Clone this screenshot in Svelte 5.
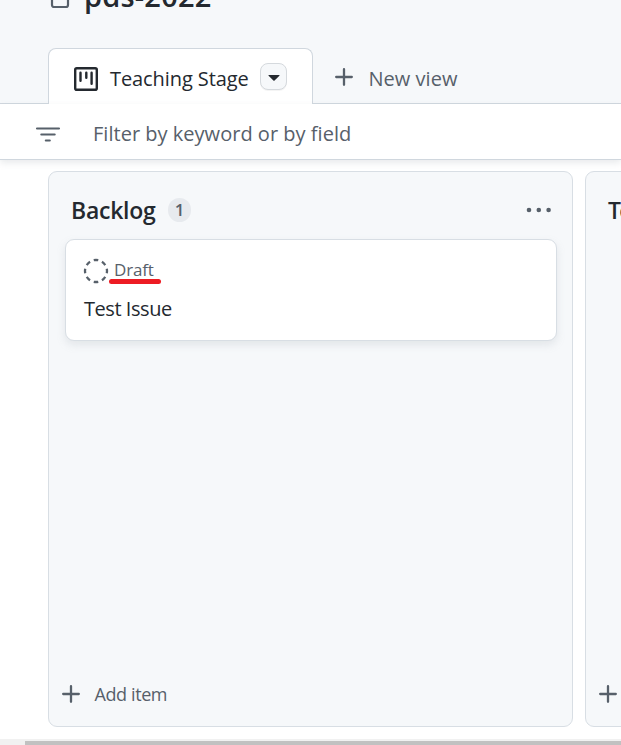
<script>
  const columns = [
    { name: 'Backlog', count: 1, items: [{ kind: 'Draft', title: 'Test Issue' }] },
    { name: 'Todo', count: 0, items: [], tight: true }
  ];
</script>

{#snippet plus()}
  <svg class="plus" width="18" height="18" viewBox="0 0 18 18"><path d="M9 1.2v15.6M1.2 9h15.6" /></svg>
{/snippet}

<div class="page">
  <header>
    <div class="project">
      <svg width="20" height="24" viewBox="0 0 20 24"><rect x="2" y="2" width="16" height="20" rx="2" /></svg>
      <h1>pds-2022</h1>
    </div>
    <nav>
      <div class="tab">
        <svg width="24" height="24" viewBox="0 0 24 24">
          <rect x="1.2" y="1.2" width="21.6" height="21.6" rx="1.6" />
          <path d="M6.5 5.7v8M12.3 5.7v5M17.6 5.7v11" />
        </svg>
        <span class="label">Teaching Stage</span>
        <button aria-label="View options">
          <svg width="12" height="6" viewBox="0 0 12 6"><path d="M0.8 0h10.4q.6.3.2.8L6.6 5.6q-.6.5-1.2 0L.6.8Q.2.3.8 0z" /></svg>
        </button>
      </div>
      <div class="new-view">{@render plus()}<span>New view</span></div>
    </nav>
  </header>

  <div class="filter">
    <svg width="26" height="18" viewBox="0 0 26 18"><path d="M2 2.5h22M6.3 8.5h13.4M10.8 14.5h4" /></svg>
    <span>Filter by keyword or by field</span>
  </div>

  <main>
    {#each columns as column}
      <section>
        <div class="head">
          <h2 class:tight={column.tight}>{column.name}</h2>
          <span class="count">{column.count}</span>
          <svg class="dots" width="26" height="6" viewBox="0 0 26 6">
            <circle cx="3" cy="3" r="2.3" /><circle cx="12.8" cy="3" r="2.3" /><circle cx="22.6" cy="3" r="2.3" />
          </svg>
        </div>
        <div class="items">
          {#each column.items as item}
            <article>
              <div class="kind">
                <svg width="26" height="26" viewBox="0 0 26 26"><circle cx="13" cy="13" r="11" pathLength="80" /></svg>
                <span>{item.kind}</span>
                <i></i>
              </div>
              <p>{item.title}</p>
            </article>
          {/each}
        </div>
        <div class="add">{@render plus()}<span>Add item</span></div>
      </section>
    {/each}
  </main>
  <div class="scroll"><div class="thumb"></div></div>
</div>

<style>
  :global(body) { margin: 0; overflow: hidden; }
  .page {
    width: 621px; height: 745px; overflow: hidden; background: #fff;
    display: flex; flex-direction: column; box-sizing: border-box;
    font-family: "Open Sans", "Noto Sans", sans-serif; color: #24292f;
  }
  .page * { box-sizing: border-box; }
  svg { display: block; flex: none; fill: none; stroke: #57606a; }
  h1, h2, p { margin: 0; }
  span, h1, h2, p { white-space: nowrap; }
  header {
    height: 104px; flex: none; background: #f6f8fa; border-bottom: 1px solid #d0d7de;
    display: flex; flex-direction: column;
  }
  .project { height: 48px; flex: none; padding-left: 50px; display: flex; align-items: flex-start; }
  .project svg { margin-top: -15px; stroke-width: 2.2; }
  h1 { margin: -22px 0 0 14px; font-size: 29px; line-height: 36px; font-weight: 600; letter-spacing: 0.2px; }
  nav { display: flex; height: 56px; flex: none; padding-left: 48px; }
  .tab {
    width: 265px; height: 56px; background: #fff; border: 1px solid #d0d7de; border-bottom: 0;
    border-radius: 8px 8px 0 0; padding: 0 0 0 25px; display: flex; align-items: center;
  }
  .tab > svg { stroke: #24292f; stroke-width: 2.4; margin-top: 5px; stroke-linecap: round; }
  .label { margin: 3px 0 0 12px; width: 138px; font-size: 20px; letter-spacing: -0.08px; }
  button {
    width: 27px; height: 27px; margin: 0 0 1px 12px; padding: 0; border: 1px solid #d5d9dd; border-radius: 8px;
    background: #f6f8fa; box-shadow: 0 1px 0 rgba(31, 35, 40, .05); display: flex; align-items: center; justify-content: center;
  }
  button svg { fill: #24292f; stroke: none; margin-top: 4px; }
  .plus { stroke-width: 2.3; stroke-linecap: round; }
  .new-view { display: flex; align-items: center; padding: 2px 0 0 21.5px; color: #57606a; font-size: 20px; }
  .new-view span { margin: 2px 0 0 16px; letter-spacing: 0.03px; }
  .filter {
    height: 56px; flex: none; border-bottom: 1px solid #d0d7de; padding: 4px 0 0 35px; display: flex; align-items: center;
    position: relative; box-shadow: 0 3px 7px rgba(140, 149, 159, .2); color: #57606a; font-size: 20px;
  }
  .filter svg { stroke-width: 2.1; stroke-linecap: round; margin-top: 2px; }
  .filter span { margin-left: 32px; letter-spacing: 0.02px; }
  main { display: flex; gap: 12px; height: 567px; flex: none; padding: 11px 0 0 48px; }
  section {
    width: 525px; height: 556px; flex: none; background: #f6f8fa; border: 1px solid #d8dee4; border-radius: 9px;
    padding: 0 15px 0 16px; display: flex; flex-direction: column;
  }
  .head { height: 67px; flex: none; padding: 10px 5px 0 6px; display: flex; align-items: center; }
  h2 { width: 86px; margin-top: -1px; font-size: 23px; line-height: 30px; font-weight: 600; letter-spacing: -0.25px; }
  h2.tight { letter-spacing: -1.8px; }
  .count {
    width: 23px; height: 24px; margin: -2px 0 0 11px; border-radius: 12px; background: #e7eaee; color: #57606a;
    font-size: 17px; font-weight: 600; line-height: 24px; text-align: center;
  }
  .dots { margin-left: auto; margin-top: -1px; fill: #57606a; stroke: none; }
  .items { flex: 1; }
  article {
    height: 102px; background: #fff; border: 1px solid #d8dee4; border-radius: 9px; padding: 18px 0 0 17px;
    box-shadow: 0 4px 8px rgba(140, 149, 159, .18);
  }
  .kind { position: relative; height: 26px; display: flex; align-items: center; color: #57606a; font-size: 17px; }
  .kind svg { stroke-width: 2.3; stroke-dasharray: 5.4 4.6; stroke-dashoffset: 2.7; stroke-linecap: butt; }
  .kind span { margin: -3px 0 0 5px; letter-spacing: -0.15px; }
  .kind i { position: absolute; left: 26px; top: 21px; width: 52px; height: 5px; border-radius: 2.5px; background: #ed1c24; }
  p { margin-top: 11px; padding-left: 1px; font-size: 20px; line-height: 28px; letter-spacing: -0.45px; }
  .add { height: 64px; flex: none; margin-left: -3.5px; display: flex; align-items: center; color: #57606a; font-size: 18px; }
  .add :global(svg) { margin-top: -1px; }
  .add span { margin: 0 0 0 15px; letter-spacing: -0.4px; }
  .scroll { height: 6px; margin-top: 12px; flex: none; background: #f1f1f1; padding: 2px 0 0 25px; }
  .thumb { height: 4px; background: #c1c1c1; }
</style>
